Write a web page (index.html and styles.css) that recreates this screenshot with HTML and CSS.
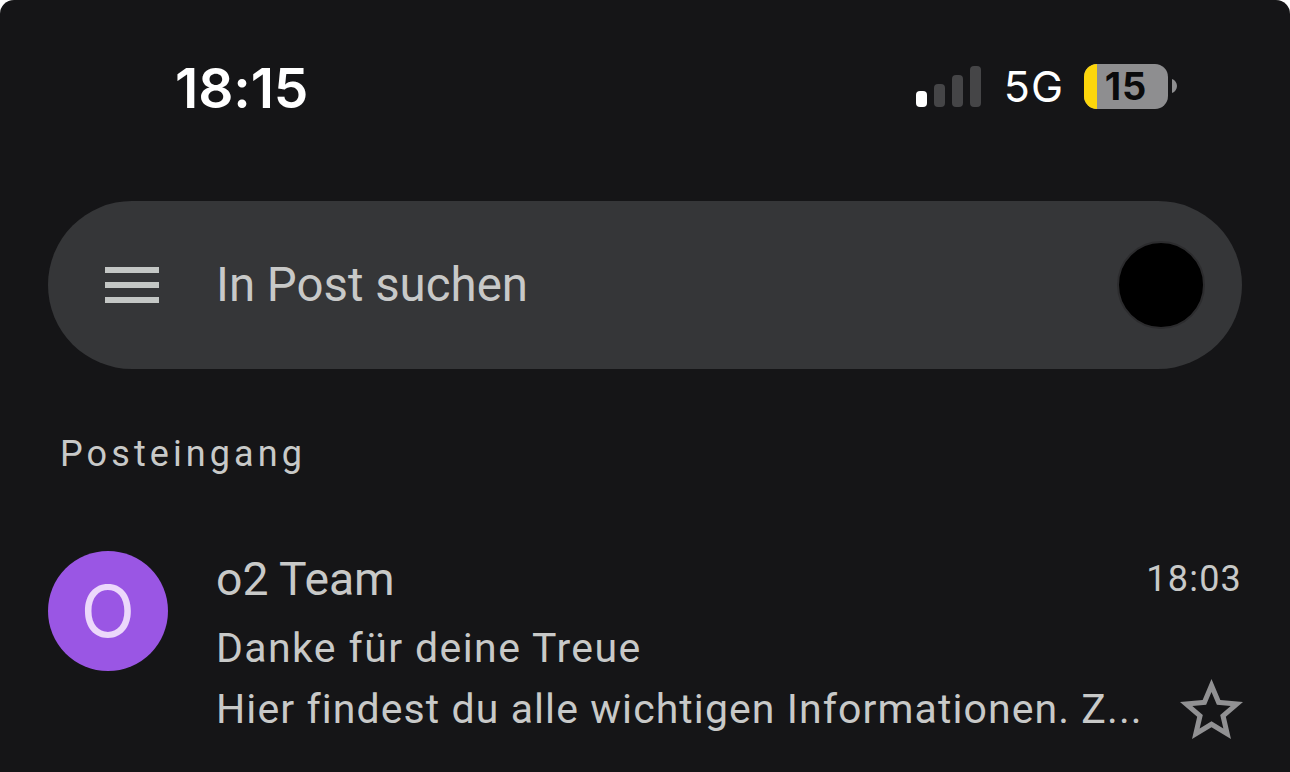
FILE: index.html
```html
<!DOCTYPE html>
<html lang="de">
<head>
<meta charset="utf-8">
<title>Post</title>
<link rel="stylesheet" href="styles.css">
</head>
<body>
<div class="screen">
  <header class="status">
    <span class="clock">18:15</span>
    <div class="status-right">
      <div class="signal"><i class="b1"></i><i class="b2"></i><i class="b3"></i><i class="b4"></i></div>
      <span class="net">5G</span>
      <div class="battery">
        <div class="batt-body"><span class="batt-fill"></span><span class="batt-num">15</span></div>
        <svg class="batt-cap" width="5" height="14" viewBox="0 0 5 14"><path d="M0 0c3 1 5 4 5 7s-2 6-5 7z" fill="#8e8e90"/></svg>
      </div>
    </div>
  </header>
  <div class="search">
    <svg class="menu" width="54" height="36" viewBox="0 0 54 36"><path d="M0 3h54M0 18h54M0 33h54" stroke="#c4c7c5" stroke-width="6" fill="none"/></svg>
    <span class="search-text">In Post suchen</span>
    <span class="account"></span>
  </div>
  <div class="label">Posteingang</div>
  <div class="mail">
    <div class="avatar">O</div>
    <div class="mail-body">
      <div class="row-top"><span class="sender">o2 Team</span><span class="time">18:03</span></div>
      <div class="subject">Danke für deine Treue</div>
      <div class="row-bottom">
        <span class="snippet">Hier findest du alle wichtigen Informationen. Z...</span>
        <svg class="star" width="63" height="60" viewBox="2 2 20 19"><path d="M22 9.24l-7.19-.62L12 2 9.19 8.63 2 9.24l5.46 4.73L5.82 21 12 17.27 18.18 21l-1.63-7.03L22 9.24zM12 15.4l-3.76 2.27 1-4.28-3.32-2.88 4.38-.38L12 6.1l1.71 4.04 4.38.38-3.32 2.88 1 4.28L12 15.4z" fill="#919193"/></svg>
      </div>
    </div>
  </div>
</div>
</body>
</html>
```
FILE: styles.css
```css
html, body { margin: 0; padding: 0; background: #fff; }
.screen { width: 1290px; height: 772px; background: #151517; border-radius: 14px 14px 0 0; overflow: hidden; font-family: Roboto, "Noto Sans", sans-serif; box-sizing: border-box; padding: 0 48px; }
.status { height: 201px; box-sizing: border-box; padding: 58px 65px 0 127px; display: flex; justify-content: space-between; align-items: flex-start; }
.clock { font-family: Inter, sans-serif; font-weight: 600; font-size: 55px; line-height: 60px; color: #fff; letter-spacing: -0.1px; }
.status-right { display: flex; align-items: center; height: 56px; }
.signal { display: flex; align-items: flex-end; gap: 7px; height: 41px; margin-right: 23px; }
.signal i { display: block; width: 11px; border-radius: 4px; background: #454547; }
.signal .b1 { height: 16px; background: #fff; }
.signal .b2 { height: 23px; }
.signal .b3 { height: 32px; }
.signal .b4 { height: 41px; }
.net { font-family: Inter, sans-serif; font-weight: 400; font-size: 43px; color: #fff; margin-right: 20px; letter-spacing: 1px; }
.battery { display: flex; align-items: center; }
.batt-body { position: relative; width: 84px; height: 45px; border-radius: 13px; background: #8e8e90; overflow: hidden; display: flex; align-items: center; justify-content: center; }
.batt-fill { position: absolute; left: 0; top: 0; bottom: 0; width: 13px; background: #fdd60b; }
.batt-num { position: relative; font-family: Inter, sans-serif; font-weight: 700; font-size: 38px; color: #0a0a0b; letter-spacing: 1px; }
.batt-cap { flex: none; margin-left: 4px; }
.search { height: 168px; border-radius: 84px; background: #353638; display: flex; align-items: center; padding: 0 37px 0 57px; }
.menu { flex: none; margin-right: 57px; }
.search-text { flex: 1; font-size: 47.4px; color: #c8c9c8; }
.account { width: 88px; height: 88px; border-radius: 50%; background: #000; box-sizing: border-box; border: 2px solid #2c2c2e; }
.label { margin: 64px 0 0 12px; font-size: 36px; line-height: 42px; font-weight: 450; letter-spacing: 4.1px; color: #c8c9c8; }
.mail { display: flex; margin-top: 76px; }
.avatar { flex: none; width: 120px; height: 120px; border-radius: 50%; background: #9a56e4; color: #ecd8fb; font-family: Inter, sans-serif; font-size: 71px; display: flex; align-items: center; justify-content: center; margin-right: 48px; }
.mail-body { flex: 1; min-width: 0; }
.row-top { display: flex; justify-content: space-between; align-items: center; height: 56px; }
.sender { font-size: 46.3px; color: #c8c9c8; }
.time { font-size: 36px; color: #c8c9c8; letter-spacing: 1.2px; }
.subject { font-size: 41px; color: #c8c9c8; line-height: 60px; letter-spacing: 1.4px; margin-top: 11px; }
.row-bottom { display: flex; justify-content: space-between; align-items: center; height: 62px; }
.snippet { font-size: 41px; color: #c8c9c8; letter-spacing: 1.08px; white-space: nowrap; }
.star { flex: none; margin-right: -1px; }
```
